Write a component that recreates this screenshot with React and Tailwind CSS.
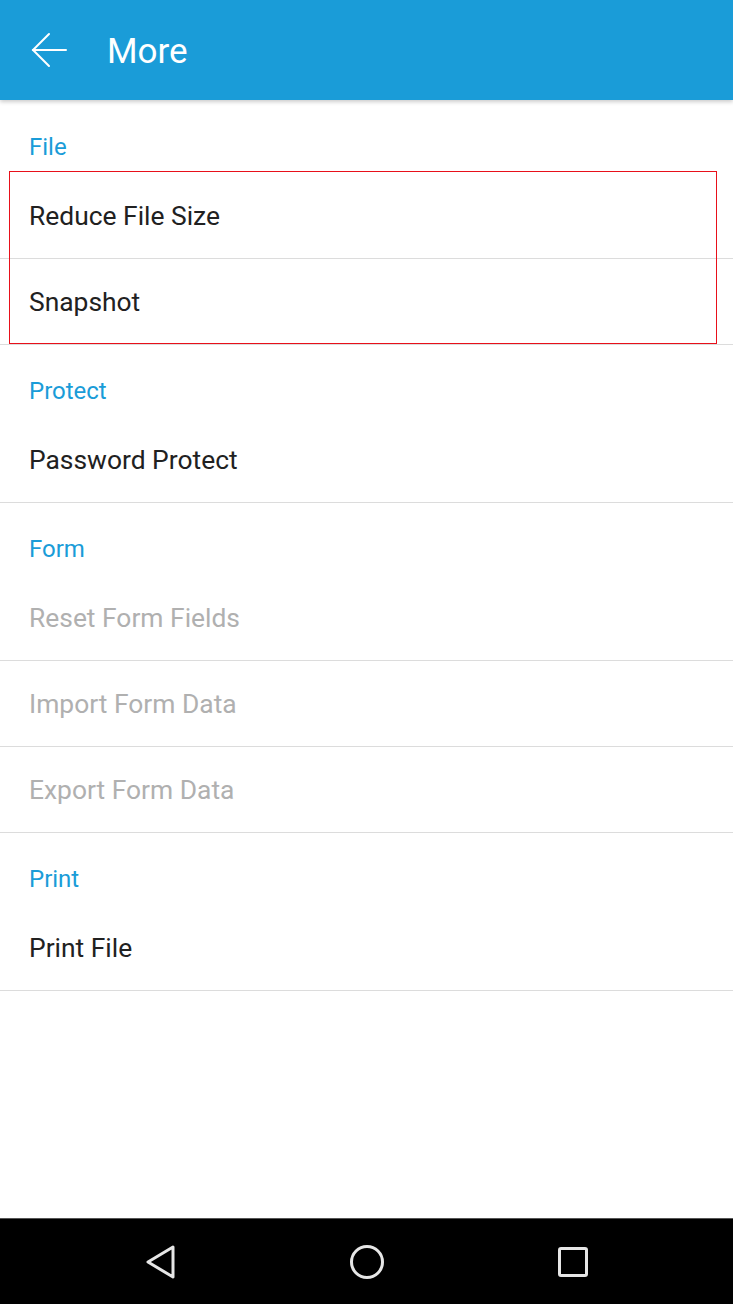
import React from "react";

const sections = [
  {
    title: "File",
    items: [
      { label: "Reduce File Size", enabled: true },
      { label: "Snapshot", enabled: true },
    ],
    highlight: true,
  },
  { title: "Protect", items: [{ label: "Password Protect", enabled: true }] },
  {
    title: "Form",
    items: [
      { label: "Reset Form Fields", enabled: false },
      { label: "Import Form Data", enabled: false },
      { label: "Export Form Data", enabled: false },
    ],
  },
  { title: "Print", items: [{ label: "Print File", enabled: true }] },
];

function Section({ section }) {
  return (
    <div>
      <div className="h-[72px] pl-[29px] pt-[32px] text-[24px] leading-[28px] text-[#1a9cd8]">
        {section.title}
      </div>
      <div className="relative">
        {section.items.map((item) => (
          <div
            key={item.label}
            className={`flex h-[86px] items-center border-b border-[#dcdcdc] pl-[29px] pt-[2px] text-[26.4px] ${
              item.enabled ? "text-[#212121]" : "text-[#b0b0b0]"
            }`}
          >
            {item.label}
          </div>
        ))}
        {section.highlight && (
          <div className="pointer-events-none absolute left-[9px] top-[-2px] h-[173px] w-[708px] border border-[#e8101a]" />
        )}
      </div>
    </div>
  );
}

export default function App() {
  return (
    <div
      className="flex h-[1304px] w-[733px] flex-col bg-white"
      style={{ fontFamily: "Roboto, 'Liberation Sans', sans-serif" }}
    >
      <header className="relative z-10 flex h-[100px] shrink-0 items-center bg-[#1a9cd8] shadow-[0_2px_4px_rgba(0,0,0,0.2)]">
        <svg
          className="ml-[31px] h-[36px] w-[36px]"
          viewBox="0 0 36 36"
          fill="none"
          stroke="white"
          strokeWidth="2"
          strokeLinecap="round"
        >
          <path d="M2 18 H35" />
          <path d="M18 2 L2 18 L18 34" />
        </svg>
        <h1 className="ml-[40px] pt-[4px] text-[35px] text-white">More</h1>
      </header>

      <main className="flex-1 pt-[1px]">
        {sections.map((s) => (
          <Section key={s.title} section={s} />
        ))}
      </main>

      <nav className="flex h-[86px] shrink-0 items-center justify-center border-t border-[#555] bg-black">
        <div className="flex w-[206px] justify-center">
          <svg width="30" height="34" viewBox="0 0 30 34" fill="none" stroke="#e6e6e6" strokeWidth="3" strokeLinejoin="round">
            <path d="M27 2 L2 17 L27 32 Z" />
          </svg>
        </div>
        <div className="flex w-[206px] justify-center">
          <svg width="36" height="36" viewBox="0 0 36 36" fill="none" stroke="#e6e6e6" strokeWidth="3">
            <circle cx="18" cy="18" r="15.5" />
          </svg>
        </div>
        <div className="flex w-[206px] justify-center">
          <svg width="30" height="30" viewBox="0 0 30 30" fill="none" stroke="#e6e6e6" strokeWidth="3">
            <rect x="1.5" y="1.5" width="27" height="27" rx="1.5" />
          </svg>
        </div>
      </nav>
    </div>
  );
}
